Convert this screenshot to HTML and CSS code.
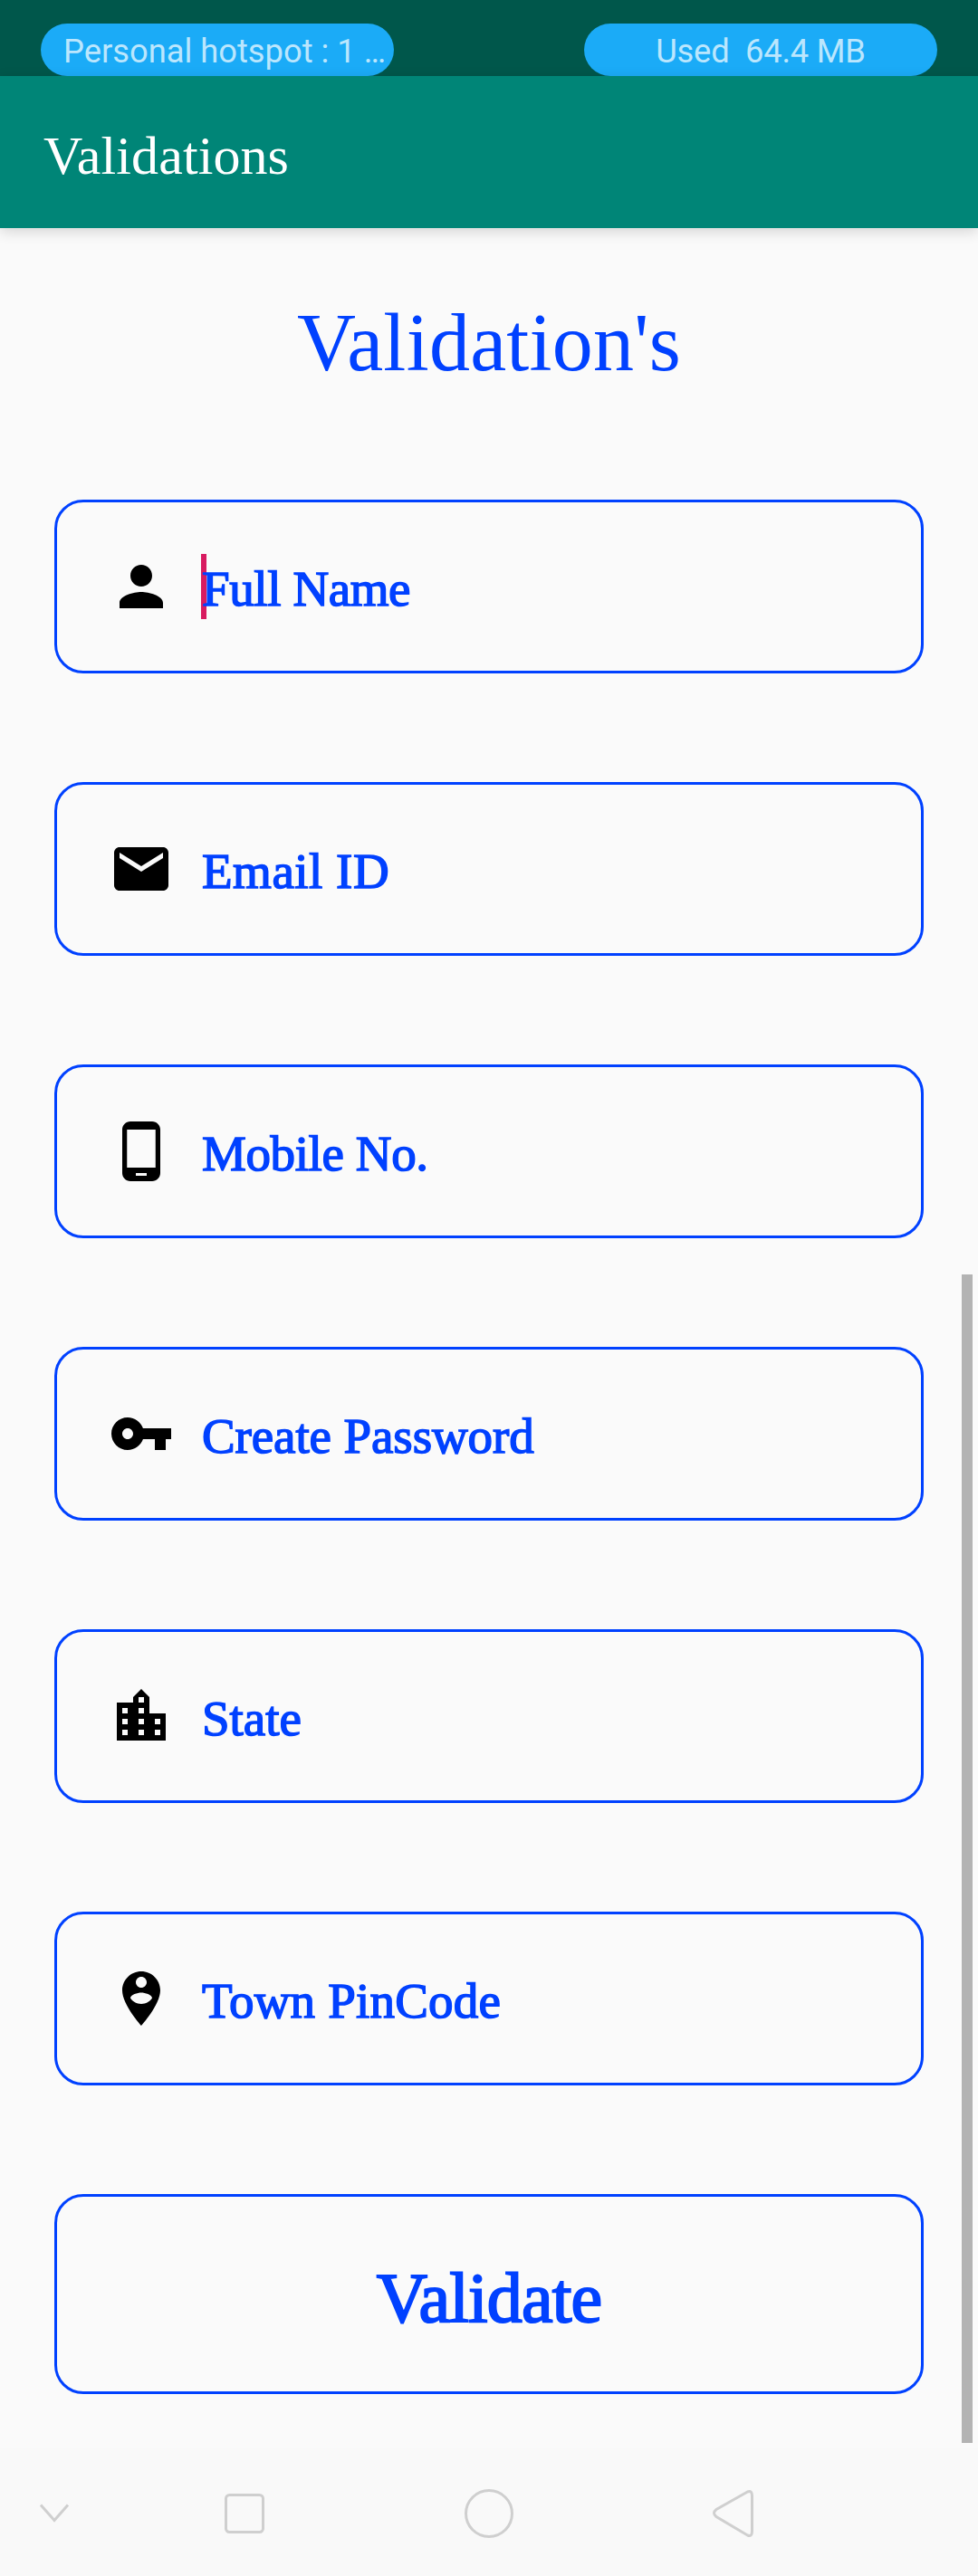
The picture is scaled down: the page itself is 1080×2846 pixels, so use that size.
FILE: index.html
```html
<!DOCTYPE html>
<html lang="en">
<head>
<meta charset="utf-8">
<title>Validations</title>
<link rel="stylesheet" href="styles.css">
</head>
<body>
<div class="status-bar">
  <div class="pill pill-start"><span class="hotspot">Personal hotspot : 1 …</span></div>
  <div class="pill"><span class="usage">Used&nbsp; 64.4 MB</span></div>
</div>
<header class="app-bar"><span class="app-title">Validations</span></header>
<main class="content">
  <h1 class="heading">Validation's</h1>
  <div class="form">
    <div class="field">
      <svg class="icon" viewBox="0 0 24 24"><path d="M12 12c2.21 0 4-1.79 4-4s-1.79-4-4-4-4 1.79-4 4 1.79 4 4 4zm0 2c-2.67 0-8 1.34-8 4v2h16v-2c0-2.66-5.33-4-8-4z"/></svg>
      <span class="cursor"></span>
      <span class="label full-name">Full Name</span>
    </div>
    <div class="field">
      <svg class="icon" viewBox="0 0 24 24"><path d="M20 4H4c-1.1 0-1.99.9-1.99 2L2 18c0 1.1.9 2 2 2h16c1.1 0 2-.9 2-2V6c0-1.1-.9-2-2-2zm0 4l-8 5-8-5V6l8 5 8-5v2z"/></svg>
      <span class="label email">Email ID</span>
    </div>
    <div class="field">
      <svg class="icon" viewBox="0 0 24 24"><path d="M16 1H8C6.34 1 5 2.34 5 4v16c0 1.66 1.34 3 3 3h8c1.66 0 3-1.34 3-3V4c0-1.66-1.34-3-3-3zm-2 20h-4v-1h4v1zm3.25-3H6.75V4h10.5v14z"/></svg>
      <span class="label mobile">Mobile No.</span>
    </div>
    <div class="field">
      <svg class="icon" viewBox="0 0 24 24"><path d="M12.65 10C11.83 7.67 9.61 6 7 6c-3.31 0-6 2.69-6 6s2.69 6 6 6c2.61 0 4.83-1.67 5.65-4H17v4h4v-4h2v-4H12.65zM7 14c-1.1 0-2-.9-2-2s.9-2 2-2 2 .9 2 2-.9 2-2 2z"/></svg>
      <span class="label password">Create Password</span>
    </div>
    <div class="field">
      <svg class="icon" viewBox="0 0 24 24"><path d="M15 11V5l-3-3-3 3v2H3v14h18V11h-6zm-8 8H5v-2h2v2zm0-4H5v-2h2v2zm0-4H5V9h2v2zm6 8h-2v-2h2v2zm0-4h-2v-2h2v2zm0-4h-2V9h2v2zm0-4h-2V5h2v2zm6 12h-2v-2h2v2zm0-4h-2v-2h2v2z"/></svg>
      <span class="label state">State</span>
    </div>
    <div class="field">
      <svg class="icon" viewBox="0 0 24 24"><path d="M12 2C8.14 2 5 5.14 5 9c0 5.25 7 13 7 13s7-7.75 7-13c0-3.86-3.14-7-7-7zm0 2c1.1 0 2 .9 2 2 0 1.11-.9 2-2 2s-2-.89-2-2c0-1.1.9-2 2-2zm0 10c-1.67 0-3.14-.85-4-2.15.02-1.32 2.67-2.05 4-2.05s3.98.73 4 2.05c-.86 1.3-2.33 2.15-4 2.15z"/></svg>
      <span class="label pincode">Town PinCode</span>
    </div>
    <button class="validate" type="button">Validate</button>
  </div>
  <div class="scrollbar"></div>
</main>
<nav class="nav-bar">
  <svg class="nav-icon" viewBox="0 0 60 60"><path d="M15 20.5 30 37.500 45 20.5"/></svg>
  <svg class="nav-icon" viewBox="0 0 60 60"><rect x="9.500" y="9.500" width="41" height="41" rx="4"/></svg>
  <svg class="nav-icon" viewBox="0 0 60 60"><circle cx="30" cy="30" r="25.500"/></svg>
  <svg class="nav-icon" viewBox="0 0 60 60"><path d="M45.500 6 11 25.500Q6 29.500 11 33.500L45.500 54Q50.500 56 50.500 49.500V10.500Q50.500 4 45.500 6Z"/></svg>
</nav>
</body>
</html>
```
FILE: styles.css
```css
* { box-sizing: border-box; }

body {
  margin: 0;
  width: 1080px;
  height: 2846px;
  display: flex;
  flex-direction: column;
  background: #fafafa;
  color: #0041ff;
  font-family: "Liberation Serif", serif;
}

.status-bar {
  height: 84px;
  padding: 26px 45px 0;
  display: flex;
  justify-content: space-between;
  background: #00574b;
}

.pill {
  width: 390px;
  height: 58px;
  padding-top: 4px;
  display: flex;
  align-items: center;
  justify-content: center;
  border-radius: 29px;
  background: #1babf7;
  color: #bbe6fd;
  font-family: Roboto, sans-serif;
  font-size: 36.3px;
  line-height: 44px;
  white-space: nowrap;
}

.pill-start {
  justify-content: flex-start;
  padding-left: 25px;
}

.usage { letter-spacing: -0.2px; }

.app-bar {
  position: relative;
  height: 168px;
  padding: 8px 48px 0;
  display: flex;
  align-items: center;
  background: #008577;
  box-shadow: 0 4px 14px rgba(0, 0, 0, 0.15);
}

.app-title {
  color: #fff;
  font-size: 60px;
  letter-spacing: 0.1px;
}

.content {
  position: relative;
  height: 2453px;
}

.heading {
  margin: 0;
  padding: 3px 0 49px;
  font-size: 90px;
  font-weight: 400;
  line-height: 248px;
  letter-spacing: 0.25px;
  text-align: center;
}

.form {
  padding: 0 60px;
  display: flex;
  flex-direction: column;
  gap: 120px;
}

.field {
  position: relative;
  height: 192px;
  padding-left: 57px;
  display: flex;
  align-items: center;
  gap: 31px;
  border: 3px solid #0041ff;
  border-radius: 32px;
}

.icon {
  width: 72px;
  height: 72px;
  fill: #000;
}

.cursor {
  position: absolute;
  left: 159px;
  top: 57px;
  width: 6px;
  height: 72px;
  background: #d81b60;
}

.label {
  position: relative;
  padding-top: 6px;
  font-size: 55px;
  line-height: 68px;
  white-space: nowrap;
  -webkit-text-stroke: 1.5px #0041ff;
}

.full-name { letter-spacing: -0.4px; }
.email { letter-spacing: 0.5px; }
.mobile { letter-spacing: -0.4px; }
.password { letter-spacing: -0.1px; }
.state { letter-spacing: 0; }
.pincode { letter-spacing: 0.2px; }

.validate {
  height: 221px;
  padding: 8px 0 0;
  border: 3px solid #0041ff;
  border-radius: 32px;
  background: transparent;
  color: #0041ff;
  font-family: inherit;
  font-size: 78px;
  letter-spacing: -0.9px;
  -webkit-text-stroke: 2px #0041ff;
}

.scrollbar {
  position: absolute;
  right: 6px;
  top: 1156px;
  width: 12px;
  height: 1291px;
  background: #b3b3b3;
}

.nav-bar {
  height: 141px;
  padding: 42px 240px 0 30px;
  display: grid;
  grid-template-columns: 210px 270px 270px 60px;
  align-content: start;
  background: #f9f9f9;
}

.nav-icon {
  width: 60px;
  height: 60px;
  fill: none;
  stroke: #cfcfcf;
  stroke-width: 3;
}
```
